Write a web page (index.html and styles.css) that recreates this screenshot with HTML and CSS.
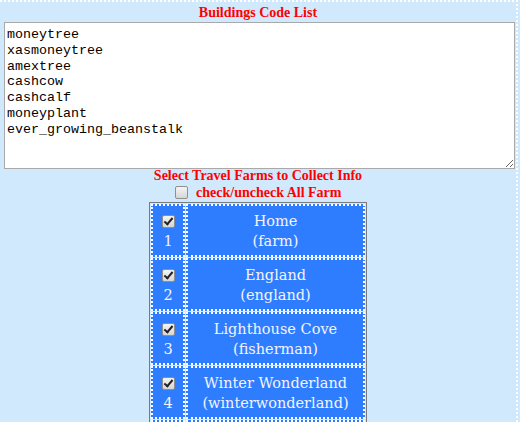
FILE: index.html
```html
<!DOCTYPE html>
<html>
<head>
<meta charset="utf-8">
<link rel="stylesheet" href="styles.css">
</head>
<body>
<div class="page">
  <div class="title">Buildings Code List</div>
  <textarea class="codes">moneytree
xasmoneytree
amextree
cashcow
cashcalf
moneyplant
ever_growing_beanstalk</textarea>
  <div class="title sub">Select Travel Farms to Collect Info</div>
  <div class="title all"><input type="checkbox" class="chk"> check/uncheck All Farm</div>
  <table class="farms">
    <tr><td class="sel"><input type="checkbox" checked class="chk"><span class="num">1</span></td><td class="name">Home<br>(farm)</td></tr>
    <tr><td class="sel"><input type="checkbox" checked class="chk"><span class="num">2</span></td><td class="name">England<br>(england)</td></tr>
    <tr><td class="sel"><input type="checkbox" checked class="chk"><span class="num">3</span></td><td class="name">Lighthouse Cove<br>(fisherman)</td></tr>
    <tr><td class="sel"><input type="checkbox" checked class="chk"><span class="num">4</span></td><td class="name">Winter Wonderland<br>(winterwonderland)</td></tr>
    <tr class="more"><td class="sel"></td><td class="name"></td></tr>
  </table>
</div>
</body>
</html>
```
FILE: styles.css
```css
html, body {
  margin: 0;
  padding: 0;
  background: #d0e9fc;
  overflow: hidden;
}
.page {
  width: 516px;
  height: 440px;
  border-top: 2px dotted #fff;
  border-right: 2px dotted #fff;
  font-family: "DejaVu Serif", "Liberation Serif", serif;
}
.title {
  color: #ff0000;
  font-family: "Liberation Serif", serif;
  font-weight: bold;
  font-size: 14px;
  text-align: center;
  line-height: 18px;
  height: 18px;
  padding-top: 2px;
}
.codes {
  display: block;
  box-sizing: border-box;
  margin: 0 0 0 4px;
  width: 511px;
  height: 147px;
  border: 1px solid #a9a9a9;
  padding: 4px 2px 2px;
  font-family: "Liberation Mono", monospace;
  font-size: 13.33px;
  line-height: 15.8px;
  color: #000;
  background: #fff;
  resize: both;
}
.sub {
  padding-top: 0;
  height: 16px;
  line-height: 14px;
}
.all {
  height: 17px;
  line-height: 16px;
  padding-top: 0;
}
.chk {
  appearance: none;
  -webkit-appearance: none;
  position: relative;
  box-sizing: border-box;
  width: 13px;
  height: 13px;
  margin: 0;
  border: 1px solid #8f8f8f;
  border-radius: 2px;
  background: linear-gradient(#f4f4f4, #d6d6d6);
}
.chk:checked::after {
  content: "";
  position: absolute;
  left: 3px;
  top: 0px;
  width: 3px;
  height: 7px;
  border-right: 2px solid #222;
  border-bottom: 2px solid #222;
  transform: rotate(40deg);
}
.all .chk {
  margin: 0 5px 0 0;
  vertical-align: -2px;
}
.farms {
  margin: 0 auto;
  border: 1px solid #7a7a7a;
  border-spacing: 1px;
  background: #d0e9fc;
}
.farms td {
  background: #2e7dfe;
  border: 2px dotted #fff;
  color: #f4f4ff;
  text-align: center;
  font-size: 14.5px;
  line-height: 20px;
}
.farms td.sel {
  width: 30px;
  padding: 9px 0 4px;
}
.farms td.sel .chk {
  display: block;
  margin: 0 auto;
}
.num {
  display: block;
  margin-top: 3px;
  line-height: 20px;
}
.farms td.name {
  width: 167px;
  padding: 5px 4px 4px;
}
.farms .more td {
  height: 45px;
}
```
